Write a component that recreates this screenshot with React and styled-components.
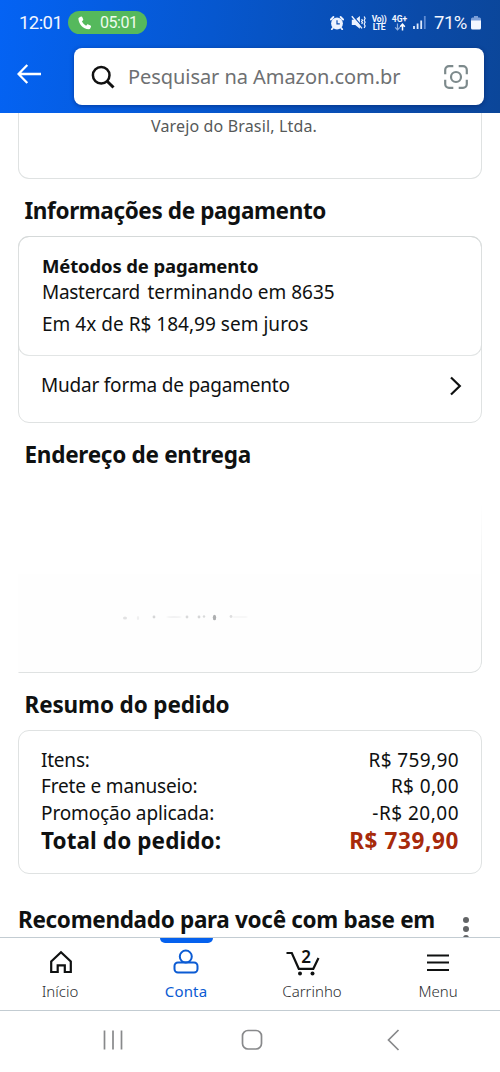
import React from "react";
import styled, { createGlobalStyle } from "styled-components";

const GlobalStyle = createGlobalStyle`
  * { box-sizing: border-box; }
  body {
    margin: 0;
    background: #fff;
    color: #0f1111;
    font-family: "Noto Sans", "Open Sans", sans-serif;
  }
`;

const Screen = styled.div`
  width: 500px;
  height: 1072px;
  display: flex;
  flex-direction: column;
  overflow: hidden;
  background: #fff;
`;

const Header = styled.header`
  height: 113px;
  flex: none;
  background: linear-gradient(97deg, #0463f4 0%, #0657cf 42%, #0a4aa8 82%, #0b4699 100%);
`;

const StatusBar = styled.div`
  height: 45px;
  padding: 0 19px 0 19px;
  display: flex;
  align-items: center;
  color: #f2f6ff;
  font-family: Roboto, sans-serif;
`;

const Clock = styled.span`
  width: 48.5px;
  font-size: 18.5px;
  letter-spacing: -0.55px;
  white-space: nowrap;
`;

const CallPill = styled.span`
  width: 79px;
  height: 23px;
  padding: 0 9px 0 10px;
  display: flex;
  align-items: center;
  justify-content: space-between;
  border-radius: 12px;
  background: #55b95c;
  color: #effbee;
  font-size: 16px;
  letter-spacing: -0.45px;
`;

const StatusIcons = styled.div`
  margin-left: auto;
  display: flex;
  align-items: center;
`;

const StatusGlyph = styled.svg`
  display: block;
  flex: none;
  margin-right: ${(p) => p.$gap || 0}px;
`;

const NetworkLabel = styled.span`
  width: ${(p) => p.$width}px;
  margin-right: ${(p) => p.$gap}px;
  display: flex;
  flex-direction: column;
  align-items: center;
  font-size: 8.5px;
  line-height: 8px;
  font-weight: 700;
  letter-spacing: ${(p) => p.$track || 0}px;
  white-space: nowrap;
`;

const Battery = styled.span`
  width: 37px;
  font-size: 18.5px;
  letter-spacing: -0.5px;
`;

const SearchRow = styled.div`
  display: flex;
  align-items: center;
  padding: 3px 16px 0 17px;
`;

const BackArrow = styled.svg`
  display: block;
  margin: -5px 33px 0 0;
`;

const SearchBox = styled.div`
  flex: 1;
  height: 57px;
  padding: 0 16px 0 17px;
  display: flex;
  align-items: center;
  border-radius: 8px;
  background: #fff;
  box-shadow: 0 1px 4px rgba(0, 20, 80, 0.45);
`;

const Placeholder = styled.span`
  flex: 1;
  margin-left: 13px;
  font-size: 20px;
  letter-spacing: -0.06px;
  color: #6e7072;
  white-space: nowrap;
`;

const Content = styled.main`
  flex: none;
  height: 824px;
  padding: 0 18px;
  overflow: hidden;
`;

const Card = styled.section`
  height: ${(p) => p.$height}px;
  border: 1px solid #dfe2e2;
  border-radius: 11px;
`;

const SellerCard = styled(Card)`
  border-top: 0;
  border-radius: 0 0 11px 11px;
  padding: 2px 0 0 132px;
  font-size: 16px;
  line-height: 22px;
  letter-spacing: 0.15px;
  color: #565959;
`;

const SectionTitle = styled.h2`
  margin: 19px 0 12px 6.5px;
  font-size: 22.5px;
  line-height: 26px;
  font-weight: 700;
  letter-spacing: ${(p) => p.$track || 0}px;
  white-space: nowrap;
`;

const MethodCard = styled(Card)`
  margin: -1px;
  padding: 16px 23px 0;
  border-color: #d5d9d9 #dcdfdf #e2e5e5;
`;

const Line = styled.div`
  margin-top: ${(p) => p.$top || 0}px;
  font-size: 19px;
  line-height: 26px;
  letter-spacing: ${(p) => p.$track || 0}px;
  white-space: nowrap;
`;

const MethodTitle = styled(Line)`
  font-size: 18.5px;
  font-weight: 700;
`;

const Word = styled.span`
  letter-spacing: ${(p) => p.$track}px;
  margin-right: ${(p) => p.$gap || 0}px;
`;

const ChangeRow = styled.div`
  display: flex;
  justify-content: space-between;
  padding: 17px 18px 0 22px;
`;

const ChevronIcon = styled.svg`
  display: block;
  margin-top: 4px;
`;

const AddressCard = styled(Card)`
  border-top-color: transparent;
  border-left-color: transparent;
  border-bottom-left-radius: 0;
  padding: 129px 0 0 80px;
  background: #fefefe;
  -webkit-mask-image: linear-gradient(to bottom, transparent 12%, #000 85%);
  mask-image: linear-gradient(to bottom, transparent 12%, #000 85%);
`;

const SummaryCard = styled(Card)`
  padding: 16px 22px 0;
`;

const SummaryRow = styled.div`
  display: flex;
  justify-content: space-between;
  font-size: 19px;
  line-height: 26.4px;
  white-space: nowrap;
`;

const TotalRow = styled(SummaryRow)`
  font-size: 22.5px;
  line-height: 29px;
  font-weight: 700;
`;

const Label = styled.span`
  letter-spacing: ${(p) => p.$track}px;
`;

const Amount = styled.span`
  letter-spacing: ${(p) => p.$track}px;
  color: ${(p) => p.$color || "inherit"};
`;

const RecommendedRow = styled.div`
  margin-top: 33px;
  display: flex;
  justify-content: space-between;
  padding-right: 13px;
`;

const RecommendedTitle = styled(SectionTitle)`
  margin: 0;
`;

const MoreDots = styled.div`
  display: flex;
  flex-direction: column;
  gap: 3px;
  padding-top: 10px;
`;

const Dot = styled.i`
  width: 6px;
  height: 6px;
  border-radius: 50%;
  background: #626466;
`;

const TabBar = styled.nav`
  flex: none;
  height: 74px;
  display: grid;
  grid-template-columns: repeat(4, 126px);
  margin: 0 -1px 0 -3px;
  border-top: 1px solid #c3ccd2;
  border-bottom: 1px solid #c3ccd2;
`;

const Tab = styled.a`
  display: flex;
  flex-direction: column;
  align-items: center;
  font-size: 15px;
  font-weight: ${(p) => (p.$active ? 400 : 300)};
  line-height: 20px;
  letter-spacing: ${(p) => p.$track}px;
  color: ${(p) => (p.$active ? "#0b5bd3" : "#2c2e30")};
`;

const TabMarker = styled.i`
  width: 53px;
  height: 5px;
  border-radius: 0 0 5px 5px;
  background: ${(p) => (p.$active ? "#0561ee" : "transparent")};
`;

const TabIcon = styled.svg`
  display: block;
  margin: 1px ${(p) => p.$shift || 0}px 5px 0;
  color: ${(p) => p.$color || "#0f1111"};
`;

const SystemBar = styled.div`
  flex: 1;
  padding: 17px 100px 0 103px;
  display: flex;
  align-items: flex-start;
  color: #88898b;
`;

const SystemIcon = styled.svg`
  display: block;
  margin-right: ${(p) => p.$gap || 0}px;
`;

const costs = [
  { label: "Itens:", lt: -0.22, value: "R$ 759,90", vt: 0.38 },
  { label: "Frete e manuseio:", lt: -0.17, value: "R$ 0,00", vt: 0.4 },
  { label: "Promoção aplicada:", lt: -0.12, value: "-R$ 20,00", vt: 0.48 },
];

function StatusRow() {
  return (
    <StatusBar>
      <Clock>12:01</Clock>
      <CallPill>
        <svg width="14" height="14" viewBox="0 0 14 14">
          <path
            d="M1.2 1.4 3 .5c.5-.2 1 0 1.200.5l1 2.300c.2.5.1.9-.3 1.200l-1 .8c.8 1.900 2.200 3.300 4.200 4.400l.9-1c.3-.4.800-.5 1.200-.3l2.300 1.100c.5.2.7.7.5 1.200l-.8 1.700c-.3.6-.8.9-1.500.8C4.800 12.500 1 8.500.4 2.900c-.1-.7.2-1.200.8-1.500z"
            fill="#fff"
          />
        </svg>
        05:01
      </CallPill>
      <StatusIcons>
        <StatusGlyph $gap={7} width="14" height="14" viewBox="0 0 14 14">
          <circle cx="7" cy="7.5" r="5.9" fill="#edf3ff" />
          <path d="M.9 3.500 3.400 1M13.100 3.500 10.600 1M2.800 12l-1 1.300M11.200 12l1 1.300" stroke="#edf3ff" strokeWidth="1.8" strokeLinecap="round" />
          <path d="M7 4.200v3.600h2.800" stroke="#0a4cb0" strokeWidth="1.2" fill="none" />
        </StatusGlyph>
        <StatusGlyph $gap={6} width="15" height="15" viewBox="0 0 15 15">
          <path d="M.8 4.700h3.400L8.900 1v12.800L4.200 10H.8z" fill="#edf3ff" />
          <path d="M2 .8 11.600 12" stroke="#0a4cb0" strokeWidth="1.2" />
          <path d="M.8 1.200 11 13.400" stroke="#edf3ff" strokeWidth="1.4" />
          <path d="M10.600 4.200l.9 1.200-.9 1.200.9 1.200-.9 1.200M13.200 1.500l.9 1.900-.9 1.900.9 1.900-.9 1.900.9 1.900-.9 1.900" stroke="#edf3ff" strokeWidth="1.2" fill="none" />
        </StatusGlyph>
        <NetworkLabel $width={14} $gap={6} $track={-0.4}>
          <span>Vo))</span>
          <span>LTE</span>
        </NetworkLabel>
        <NetworkLabel $width={15} $gap={6}>
          <span>4G+</span>
          <svg width="12" height="8" viewBox="0 0 12 8">
            <path d="M3.500.5v6M1.200 4.300l2.300 2.500 2.300-2.500" stroke="#8eafe0" strokeWidth="1.2" fill="none" />
            <path d="M8.500 7.500v-6M6.200 3.700l2.300-2.500 2.300 2.500" stroke="#fff" strokeWidth="1.5" fill="none" />
          </svg>
        </NetworkLabel>
        <StatusGlyph $gap={8} width="13" height="13" viewBox="0 0 13 13">
          <path d="M1 10v3M4.600 7.500V13M8.200 4.500V13" stroke="#dce8fb" strokeWidth="1.8" />
          <path d="M11.800 0v13" stroke="#5f8cd3" strokeWidth="1.8" />
        </StatusGlyph>
        <Battery>71%</Battery>
        <StatusGlyph width="10" height="14" viewBox="0 0 10 14">
          <path d="M3 0h4v1.500h1.500A1.500 1.500 0 0 1 10 3v2H0V3a1.500 1.500 0 0 1 1.500-1.500H3z" fill="#7c9fd8" />
          <path d="M0 4.500h10V12a1.500 1.500 0 0 1-1.500 1.500h-7A1.500 1.500 0 0 1 0 12z" fill="#f3f7ff" />
        </StatusGlyph>
      </StatusIcons>
    </StatusBar>
  );
}

export default function App() {
  return (
    <Screen>
      <GlobalStyle />
      <Header>
        <StatusRow />
        <SearchRow>
          <BackArrow width="24" height="20" viewBox="0 0 24 20">
            <path d="M10.300 1 1.500 10l8.800 9M1.500 10H24" fill="none" stroke="#fff" strokeWidth="2.3" />
          </BackArrow>
          <SearchBox>
            <svg width="24" height="24" viewBox="0 0 24 24">
              <circle cx="10.2" cy="10.2" r="8.3" fill="none" stroke="#111" strokeWidth="2.5" />
              <path d="M16.200 16.200 22.500 22.500" stroke="#111" strokeWidth="3" />
            </svg>
            <Placeholder>Pesquisar na Amazon.com.br</Placeholder>
            <svg width="24" height="24" viewBox="0 0 24 24" fill="none" stroke="#7d8a8c" strokeWidth="2.2">
              <path d="M1.200 9.300V5a3.800 3.800 0 0 1 3.800-3.800h4.300M14.700 1.200H19A3.800 3.800 0 0 1 22.800 5v4.300M22.800 14.700V19a3.800 3.800 0 0 1-3.800 3.800h-4.300M9.300 22.800H5A3.800 3.800 0 0 1 1.200 19v-4.300" />
              <circle cx="12" cy="12" r="5" />
            </svg>
          </SearchBox>
        </SearchRow>
      </Header>

      <Content>
        <SellerCard $height={66}>Varejo do Brasil, Ltda.</SellerCard>

        <SectionTitle $track={-0.38}>Informações de pagamento</SectionTitle>
        <Card $height={187}>
          <MethodCard $height={120}>
            <MethodTitle $track={-0.14}>Métodos de pagamento</MethodTitle>
            <Line>
              <Word $track={-0.3} $gap={7.5}>Mastercard</Word>
              <Word $track={0}>terminando em 8635</Word>
            </Line>
            <Line $top={6} $track={0.02}>Em 4x de R$ 184,99 sem juros</Line>
          </MethodCard>
          <ChangeRow>
            <Line $track={-0.22}>Mudar forma de pagamento</Line>
            <ChevronIcon width="14" height="20" viewBox="0 0 14 20">
              <path d="M2 1.500 10.800 10 2 18.500" fill="none" stroke="#0f1111" strokeWidth="2.2" />
            </ChevronIcon>
          </ChangeRow>
        </Card>

        <SectionTitle $track={-0.27}>Endereço de entrega</SectionTitle>
        <AddressCard $height={193}>
          <svg width="170" height="16" viewBox="0 0 170 16">
            <g fill="#9a9c9e">
              <ellipse cx="26" cy="7" rx="2" ry="1.5" opacity=".35" />
              <ellipse cx="39" cy="7" rx="1.2" ry="2" opacity=".18" />
              <circle cx="55" cy="6" r="1.4" opacity=".5" />
              <ellipse cx="75" cy="6" rx="8" ry=".7" opacity=".2" />
              <circle cx="88" cy="6" r="1.4" opacity=".45" />
              <circle cx="100" cy="6" r="1.4" opacity=".5" />
              <circle cx="105" cy="5.5" r="1.2" opacity=".45" />
              <ellipse cx="115.5" cy="6.5" rx="1.7" ry="2.7" />
              <circle cx="132" cy="5.5" r="1.4" opacity=".4" />
              <ellipse cx="141" cy="6" rx="8" ry=".6" opacity=".18" />
            </g>
          </svg>
        </AddressCard>

        <SectionTitle $track={-0.13}>Resumo do pedido</SectionTitle>
        <SummaryCard $height={144}>
          {costs.map((c) => (
            <SummaryRow key={c.label}>
              <Label $track={c.lt}>{c.label}</Label>
              <Amount $track={c.vt}>{c.value}</Amount>
            </SummaryRow>
          ))}
          <TotalRow>
            <Label $track={0.1}>Total do pedido:</Label>
            <Amount $track={0.62} $color="#a72a0b">R$ 739,90</Amount>
          </TotalRow>
        </SummaryCard>

        <RecommendedRow>
          <RecommendedTitle $track={-0.31}>Recomendado para você com base em</RecommendedTitle>
          <MoreDots>
            <Dot />
            <Dot />
            <Dot />
          </MoreDots>
        </RecommendedRow>
      </Content>

      <TabBar>
        <Tab $track={0}>
          <TabMarker />
          <TabIcon $shift={-1} width="24" height="32" viewBox="0 0 24 32">
            <path d="M2.200 17.500 12 8.300l9.800 9.200V28h-6v-6.600H8.700V28H2.200z" fill="none" stroke="currentColor" strokeWidth="2.2" />
          </TabIcon>
          Início
        </Tab>
        <Tab $active $track={0.15}>
          <TabMarker $active />
          <TabIcon width="26" height="32" viewBox="0 0 26 32" $color="#0b5bd3">
            <g fill="none" stroke="currentColor" strokeWidth="2">
              <circle cx="12.8" cy="12.6" r="6" />
              <rect x="1.5" y="18.5" width="23" height="10" rx="3.5" />
            </g>
          </TabIcon>
          Conta
        </Tab>
        <Tab $track={0}>
          <TabMarker />
          <TabIcon $shift={18} width="34" height="32" viewBox="0 0 34 32">
            <path d="M.5 9h5.300l7 15.800h14.500L32.500 14" fill="none" stroke="currentColor" strokeWidth="2.2" />
            <circle cx="14" cy="29.5" r="2" fill="currentColor" />
            <circle cx="26.5" cy="29.5" r="2" fill="currentColor" />
            <text x="20" y="18.5" textAnchor="middle" fontSize="17" fontWeight="600" letterSpacing="0" fill="currentColor">2</text>
          </TabIcon>
          Carrinho
        </Tab>
        <Tab $track={0}>
          <TabMarker />
          <TabIcon width="22" height="32" viewBox="0 0 22 32">
            <path d="M0 11.500h22M0 18.500h22M0 26h22" stroke="currentColor" strokeWidth="2.2" />
          </TabIcon>
          Menu
        </Tab>
      </TabBar>

      <SystemBar>
        <SystemIcon $gap={118} width="20" height="24" viewBox="0 0 20 24">
          <path d="M1.500 2.500v19M10 2.500v19M18.500 2.500v19" stroke="currentColor" strokeWidth="1.7" />
        </SystemIcon>
        <SystemIcon $gap={124} width="22" height="24" viewBox="0 0 22 24">
          <rect x="1.5" y="2.5" width="19" height="18.5" rx="5.5" fill="none" stroke="currentColor" strokeWidth="1.7" />
        </SystemIcon>
        <SystemIcon width="13" height="24" viewBox="0 0 13 24">
          <path d="M11.500 2 1.500 12l10 10" fill="none" stroke="currentColor" strokeWidth="1.7" />
        </SystemIcon>
      </SystemBar>
    </Screen>
  );
}
